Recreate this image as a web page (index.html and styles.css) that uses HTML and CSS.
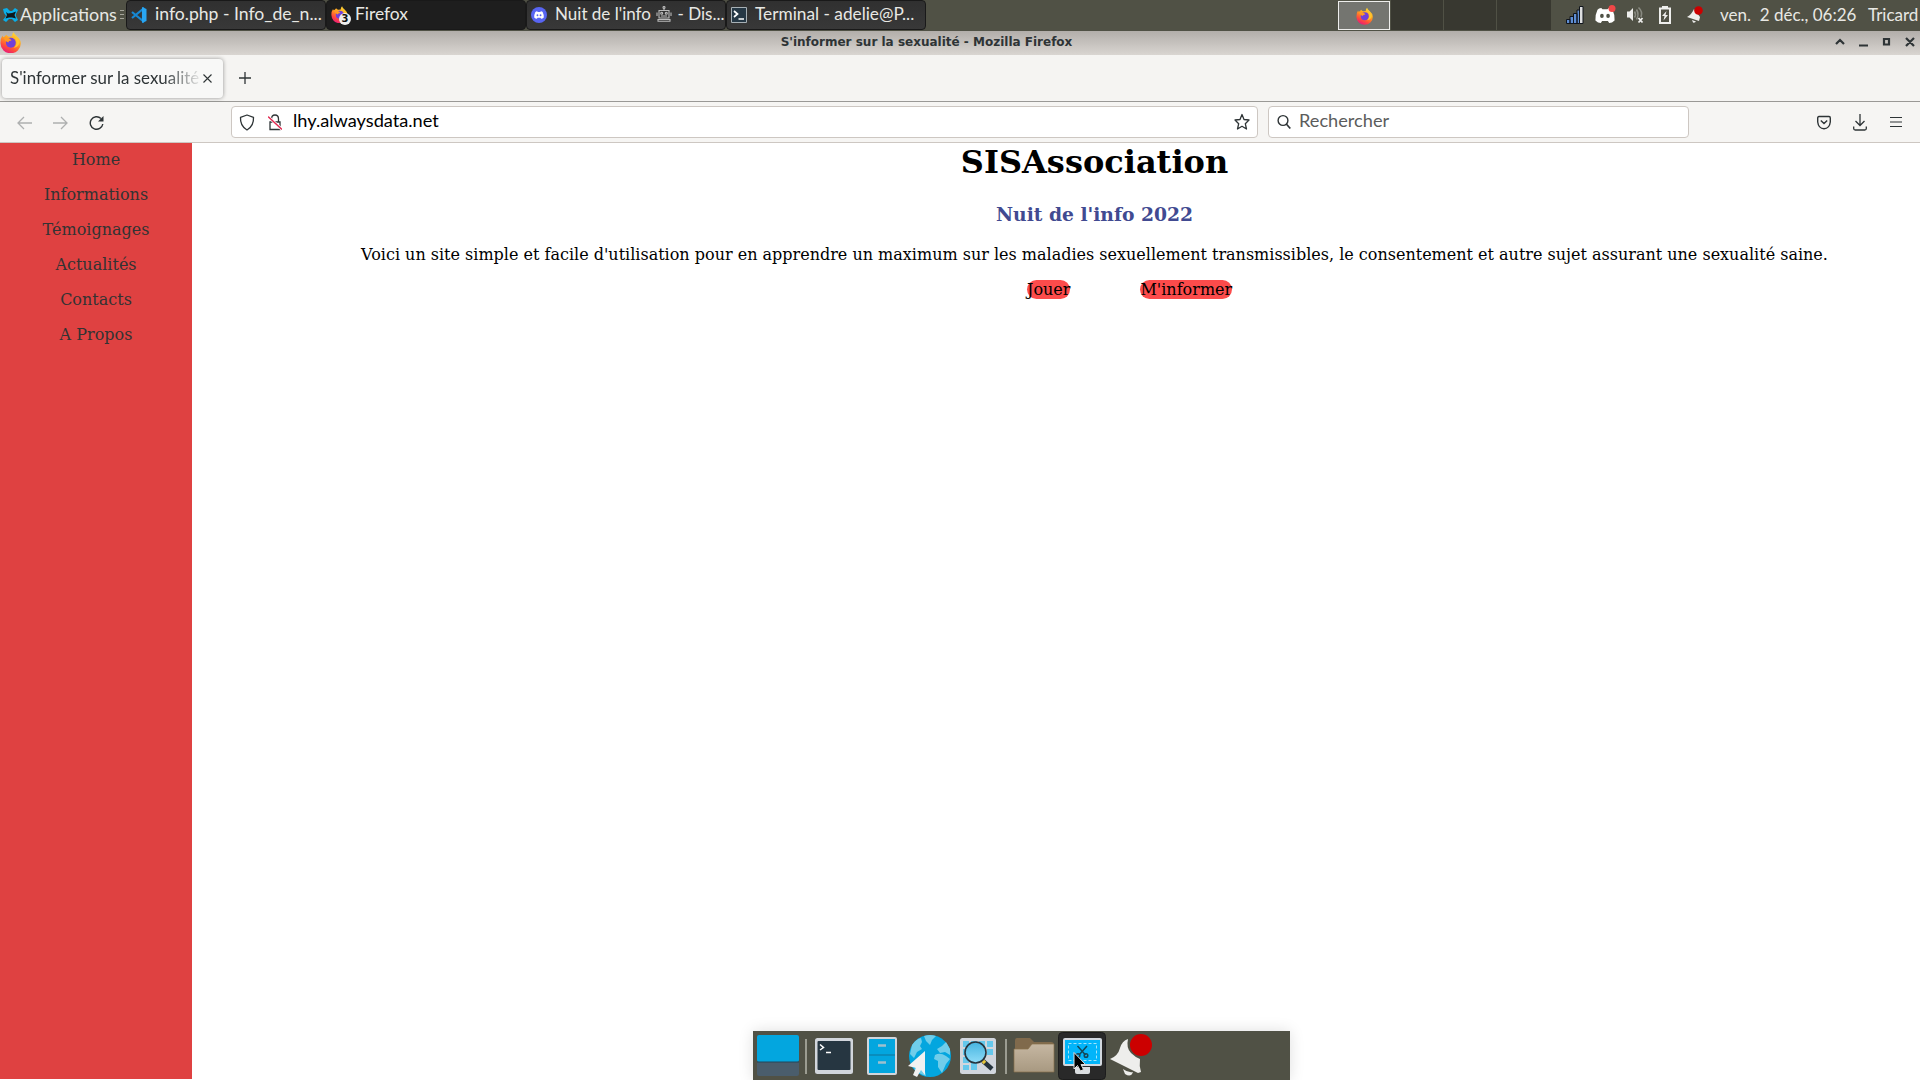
FILE: index.html
```html
<!DOCTYPE html>
<html lang="fr">
<head>
<meta charset="utf-8">
<title>S'informer sur la sexualité</title>
<link rel="stylesheet" href="styles.css">
</head>
<body>
<svg width="0" height="0" class="defs">
  <defs>
    <linearGradient id="flame" x1="0.8" y1="0" x2="0.3" y2="1"><stop offset="0" stop-color="#ffe53a"/><stop offset=".45" stop-color="#ff9a1f"/><stop offset=".75" stop-color="#ff4a3c"/><stop offset="1" stop-color="#e8187c"/></linearGradient>
    <linearGradient id="glass" x1="0" y1="0" x2="0" y2="1"><stop offset="0" stop-color="#46b4e0"/><stop offset="1" stop-color="#8fdcf8"/></linearGradient>
    <linearGradient id="paper" x1="0" y1="0" x2="0" y2="1"><stop offset="0" stop-color="#c6b7a2"/><stop offset="1" stop-color="#a89981"/></linearGradient>
    <symbol id="firefox" viewBox="0 0 20 20">
      <path d="M6 2.6Q7.2 4 8.5 4.5Q10.5 4 11.4 4Q11.4 1.6 13 .2Q13.7 2.4 16 4Q19.8 7 19.8 11A9.6 9.2 0 0 1 .5 11Q.2 6.400 2.400 3.400L3 5Q4.400 4.700 6 2.600Z" fill="url(#flame)"/>
      <circle cx="10.300" cy="10.200" r="4.700" fill="#7140d8"/>
      <path d="M3.500 6Q7 4.800 9.500 6.500L11 8.200Q8 8.400 7.800 10Q5 9 3.500 6Z" fill="#ff9b24"/>
      <path d="M14 5Q18 11 13 15Q18 14.500 18.800 9.500Q17.500 6 14 5Z" fill="#ffc52c"/>
    </symbol>
    <symbol id="discord" viewBox="0 0 24 20">
      <path d="M7.500 1L9 2.500H15L16.500 1Q20 1.500 21 3Q24 9 23.500 16Q20.500 19 17 19L15.500 16.500H8.500L7 19Q3.500 19 .5 16Q0 9 3 3Q4.500 1.500 7.500 1Z" fill="#fff"/>
      <ellipse cx="8.300" cy="10.500" rx="2.200" ry="2.500" fill="currentColor"/><ellipse cx="15.700" cy="10.500" rx="2.200" ry="2.500" fill="currentColor"/>
    </symbol>
  </defs>
</svg>

<header class="panel">
  <div class="apps">
    <svg width="15" height="16" viewBox="0 0 15 16"><path d="M0 2L4 1L7 4H9L12 1L15 3L13 7V9L15 13L12 15L9 12H6L3 15L0 13L3 9L1 6Z" fill="#0aaee8"/><path d="M3 5L5 6.500L9 6L13 4.500L11.500 8L13 11.500L9 10.500H6L2.500 11.500L4 8Z" fill="#10181b"/></svg>
    <span class="t apps-text">Applications</span>
    <svg class="grip" width="4" height="12" viewBox="0 0 4 12"><path d="M0 1.500H4M0 5.500H4M0 9.500H4" stroke="#a5a59b"/></svg>
  </div>
  <nav class="tasks">
    <div class="task">
      <svg width="16" height="16" viewBox="0 0 16 16"><path d="M1 5L12 14V2L1 11" fill="none" stroke="#1688d3" stroke-width="2.200"/><path d="M11 0L15.500 2V14L11 16Z" fill="#29a6f2"/></svg>
      <span class="t t1">info.php - Info_de_n...</span>
    </div>
    <div class="task active">
      <div class="fx"><svg width="17" height="17"><use href="#firefox"/></svg><b>3</b></div>
      <span class="t t2">Firefox</span>
    </div>
    <div class="task">
      <svg class="blurple" width="16" height="16" viewBox="0 0 16 16"><circle cx="8" cy="8" r="8" fill="#5865f2"/><use href="#discord" x="3" y="3.800" width="10" height="8.500"/></svg>
      <span class="t t3">Nuit de l'info <svg class="robot" width="16" height="16" viewBox="0 0 15 16" fill="none" stroke="#bbb" stroke-width="1.100"><circle cx="7.500" cy="1.500" r="1"/><path d="M7.500 2.500V4.500M2.500 4.500H12.500V12H2.500ZM.5 6.500V10M14.500 6.500V10M4.500 10H10.500M1.500 15.300V13.500H13.500V15.300Z"/><circle cx="5.200" cy="7.200" r="1"/><circle cx="9.800" cy="7.200" r="1"/></svg> - Dis...</span>
    </div>
    <div class="task">
      <svg width="16" height="16" viewBox="0 0 16 16"><path d="M.5 .5H15.500V15.500H.5Z" fill="#263845" stroke="#a7b0b5"/><path d="M3 4L6.500 7L3 10M7.500 12H13" fill="none" stroke="#fff" stroke-width="1.700"/></svg>
      <span class="t t4">Terminal - adelie@P...</span>
    </div>
  </nav>
  <div class="pager"><i class="current"><svg width="17" height="18"><use href="#firefox"/></svg></i><i></i><i></i><i></i></div>
  <div class="tray">
    <svg width="18" height="18" viewBox="0 0 18 18" stroke="#10151d"><path d="M.5 17.500V13.500H4V17.500ZM4 17.500V10.500H7.500V17.500ZM7.500 17.500V7.500H11V17.500ZM11 17.500V4H14V17.500Z" fill="#5e8ed4"/><path d="M13.500 17.500V.5H17V17.500Z" fill="#dedfe0"/></svg>
    <svg class="olive" width="21" height="20" viewBox="0 0 21 20"><use href="#discord" y="2" width="20" height="17"/><circle cx="17" cy="3.500" r="3.500" fill="#f04747"/></svg>
    <svg width="18" height="18" viewBox="0 0 18 18"><path d="M0 5.500H2.500L6 2V15L2.500 11.500H0Z" fill="#eeeeec"/><path d="M7.500 5.500Q9.500 8.500 7.500 11.500M9.500 3.500Q12.500 8.500 9.500 13.500M11.500 1.500Q16 5.500 14 11" fill="none" stroke="#898a81" stroke-width="1.600"/><path d="M11.500 12L15.500 16.500M15.500 12L11.500 16.500" stroke="#eeeeec" stroke-width="1.800"/></svg>
    <svg class="battery" width="12" height="18" viewBox="0 0 12 18"><path d="M1 2.500H11V17H1ZM3 1H9" fill="none" stroke="#eeeeec" stroke-width="2"/><path d="M7.500 5L3 10H5.500L4.500 14.500L9 9H6.500Z" fill="#eeeeec"/></svg>
    <svg class="bell" width="17" height="18" viewBox="0 0 17 18"><path d="M0 11Q5 8 7 3L13 11L12 15Z" fill="#eeeeec"/><path d="M5 14L9 15.500Q8 17 6 16.500Z" fill="#eeeeec"/><circle cx="11.500" cy="4.500" r="4.300" fill="#c00"/></svg>
  </div>
  <span class="t clock">ven.&nbsp; 2 déc., 06:26</span>
  <span class="t user">Tricard</span>
</header>

<div class="titlebar">
  <svg width="21" height="21"><use href="#firefox"/></svg>
  <div class="title">S'informer sur la sexualité - Mozilla Firefox</div>
  <svg class="wm" width="80" height="12" viewBox="0 0 80 12" fill="none" stroke="#2e3436" stroke-width="2.200"><path d="M1 8L5 4L9 8M24 9.500H33M49 3H54V8.500H49ZM71 2L79 10M79 2L71 10"/></svg>
</div>

<div class="tabbar">
  <div class="tab"><span class="t tabtext">S'informer sur la sexualité</span><svg width="9" height="9" viewBox="0 0 9 9"><path d="M.5 .5L8.500 8.500M8.500 .5L.5 8.500" stroke="#2e3436" stroke-width="1.100"/></svg></div>
  <svg width="12" height="12" viewBox="0 0 12 12"><path d="M6 0V12M0 6H12" stroke="#2e3436" stroke-width="1.300"/></svg>
</div>

<div class="navbar">
  <div class="arrows">
    <svg width="15" height="14" viewBox="0 0 15 14"><path d="M15 7H1M7 1L1 7L7 13" fill="none" stroke="#aeb0b0" stroke-width="1.300"/></svg>
    <svg width="15" height="14" viewBox="0 0 15 14"><path d="M0 7H14M8 1L14 7L8 13" fill="none" stroke="#aeb0b0" stroke-width="1.300"/></svg>
    <svg width="16" height="16" viewBox="0 0 16 16"><path d="M12 3.500A6.300 6.300 0 1 0 13.800 9" fill="none" stroke="#2e3436" stroke-width="1.400"/><path d="M14.500 1V6.500H9Z" fill="#2e3436"/></svg>
  </div>
  <div class="field url">
    <svg width="16" height="17" viewBox="0 0 16 17"><path d="M8 1L14.500 3.300Q15 12 8 16Q1 12 1.500 3.300Z" fill="none" stroke="#2e3436" stroke-width="1.300" stroke-linejoin="round"/></svg>
    <svg class="lock" width="14" height="17" viewBox="0 0 14 17"><path d="M2 8H12V15.500H2ZM3.500 8V5Q3.500 1 7 1T10.500 5V8" fill="none" stroke="#2e3436" stroke-width="1.300"/><path d="M0 2.500L14 15.500" stroke="#fff" stroke-width="3"/><path d="M0 2.500L14 15.500" stroke="#e22850" stroke-width="1.400"/></svg>
    <span class="t address">lhy.alwaysdata.net</span>
    <svg width="16" height="18" viewBox="0 0 16 18"><path d="M8 1.500L10 6.500L15 7L11.300 10.700L12.500 16L8 13.300L3.500 16L4.700 10.700L1 7L6 6.500Z" fill="none" stroke="#2e3436" stroke-width="1.300" stroke-linejoin="round"/></svg>
  </div>
  <div class="field search">
    <svg width="14" height="16" viewBox="0 0 14 16"><circle cx="6" cy="6.500" r="4.900" fill="none" stroke="#2e3436" stroke-width="1.400"/><path d="M9.300 10L13.300 14.500" stroke="#2e3436" stroke-width="1.700"/></svg>
    <span class="t placeholder">Rechercher</span>
  </div>
  <div class="tools">
    <svg width="14" height="15" viewBox="0 0 14 15" fill="none" stroke="#2e3436" stroke-width="1.400"><path d="M2 1.500H12Q13.300 1.500 13.300 3V7Q12.500 13.500 7 13.800Q1.500 13.500 .7 7V3Q.7 1.500 2 1.500ZM3.800 5.500L7 8.600L10.200 5.500"/></svg>
    <svg width="14" height="17" viewBox="0 0 14 17" fill="none" stroke="#2e3436" stroke-width="1.300"><path d="M7 0V11.500M2.500 7L7 11.500L11.500 7M.7 12.500V14.500Q.7 16 2.200 16H11.800Q13.300 16 13.300 14.500V12.500"/></svg>
    <svg class="menu" width="12" height="12" viewBox="0 0 12 12"><path d="M0 1.500H12M0 6H12M0 10.500H12" stroke="#2e3436" stroke-width="1.200"/></svg>
  </div>
</div>

<div class="page">
  <nav class="side"><a>Home</a><a>Informations</a><a>Témoignages</a><a>Actualités</a><a>Contacts</a><a>A Propos</a></nav>
  <main>
    <h1>SISAssociation</h1>
    <h2>Nuit de l'info 2022</h2>
    <p>Voici un site simple et facile d'utilisation pour en apprendre un maximum sur les maladies sexuellement transmissibles, le consentement et autre sujet assurant une sexualité saine.</p>
    <div class="links"><a>Jouer</a><a>M'informer</a></div>
  </main>
</div>

<div class="dock">
  <svg width="537" height="49" viewBox="0 0 537 49">
    <rect x="4" y="4" width="42" height="27" rx="2" fill="#03a6df"/><path d="M4 31H46V43Q46 45 44 45H6Q4 45 4 43Z" fill="#4a5d6c"/><path d="M4 31H46" stroke="#23465a"/>
    <path d="M53 8V43M253 8V43" stroke="#9b9c91" stroke-width="2"/>
    <rect x="62" y="7" width="38" height="36" rx="2.500" fill="#d2d6dc"/><rect x="64.500" y="10" width="33" height="29" rx="1" fill="#263641"/><path d="M67 13.500L70.500 16.500L67 19M73 21.500H78" fill="none" stroke="#fff" stroke-width="1.500"/>
    <rect x="114" y="6" width="30" height="38" rx="2" fill="#d2d6dc"/><rect x="116" y="8" width="26" height="34" fill="#03a6df"/><path d="M116 24H142" stroke="#11749b"/><path d="M125 14.500H133M125 31.500H133" stroke="#9ec0ce" stroke-width="2.500"/>
    <circle cx="177" cy="25" r="21" fill="#03a6df"/>
    <path d="M159 14Q163 8 168 7L169 11L167 15L169 18L164 21L161 27L157 23ZM171 5Q177 3 183 5L179 9L177 14L173 10ZM182 24Q187 21 193 25L197 28L193 33L189 42L185 36V30L181 28ZM189 15L193 11L197 18V24L192 21L187 22L184 18ZM165 34L171 37L173 45Q166 43 161 38Z" fill="#70cdea"/>
    <path d="M172 20V44L168 39L164 46L160 44L163 37L155 35Z" fill="#f0f1f1"/>
    <rect x="207" y="7" width="36" height="36" rx="2.500" fill="#d1d6dd"/><path d="M210 10H216V16H210ZM218 10H224V16H218ZM226 10H232V16H226ZM234 10H240V16H234ZM210 18H216V24H210ZM234 18H240V24H234ZM210 26H216V32H210ZM218 32H224V39H218ZM210 34H216V39H210Z" fill="#65c8ec"/><path d="M230 30L239 38" stroke="#26343e" stroke-width="4.500"/><path d="M229 29L232 32" stroke="#e7c73c" stroke-width="3.500"/><circle cx="222.500" cy="21.500" r="10.500" fill="url(#glass)" stroke="#26343e" stroke-width="1.600"/>
    <path d="M262 10Q262 7 264 7H277L281 11H298Q301 11 301 14V40H262Z" fill="#806a4c"/><path d="M261 18H275L279 13H301V41H261Z" fill="url(#paper)" stroke="#88704c" stroke-width=".7"/>
    <rect x="305.500" y="1.500" width="47" height="47" rx="4" fill="#292929" stroke="#1d1d1d"/><rect x="310" y="7" width="39" height="28" rx="2" fill="#d2d8df"/><rect x="312" y="9" width="35" height="24" fill="#02b5fa"/><rect x="315.500" y="12.500" width="28" height="17" fill="none" stroke="#a0e4fb" stroke-dasharray="3 2"/><path d="M322 36H337V41Q337 43 335 43H324Q322 43 322 41Z" fill="#dadde0"/>
    <g fill="none" stroke="#154757" stroke-width="1.500"><path d="M324.500 15L332.500 24M334 15L326 24"/><circle cx="325" cy="24.500" r="1.800"/><circle cx="333" cy="24.500" r="1.800"/></g>
    <path d="M321 21.500V38L324.500 34.500L327.500 40L330.500 38.500L328 33.500H332.500Z" fill="#000" stroke="#ddd" stroke-width="1"/>
    <path d="M357 28Q365 25 367 17Q369 10 375 8Q373 17 378 22Q382 26 387 28Q386 35 388 41L385 42Z" fill="#eeeeec"/><path d="M370 38Q375 42 380 41Q378 47 372 43Z" fill="#eeeeec"/><circle cx="388" cy="14" r="11" fill="#c00"/>
  </svg>
</div>
</body>
</html>
```
FILE: styles.css
```css
* { box-sizing: border-box; }
body { margin: 0; width: 1920px; height: 1080px; overflow: hidden; display: flex; flex-direction: column; background: #fff; font-family: "DejaVu Serif", serif; }
svg { display: block; flex: none; }
.defs { position: absolute; }
.t { font-family: Lato, "Noto Sans", sans-serif; font-size: 17px; line-height: 24px; white-space: pre; flex: none; }
.blurple { color: #5865f2; }
.olive { color: #505145; }

.panel { height: 31px; flex: none; background: #505145; display: flex; align-items: center; color: #e8e8e4; }
.panel .t { padding-bottom: 2px; }
.apps { width: 126px; display: flex; align-items: center; padding-left: 3px; padding-bottom: 1px; }
.panel .apps-text { margin-left: 2px; width: 95px; font-size: 17.9px; padding-bottom: 3px; }
.grip { margin-left: 5px; }
.tasks { display: flex; width: 800px; height: 31px; }
.task { width: 200px; height: 30px; display: flex; align-items: center; padding: 0 0 1px 4px; gap: 8px; background: linear-gradient(#303030, #383838); border: 1px solid #191919; border-radius: 4px; overflow: hidden; }
.task.active { background: #1e1e1e; gap: 7px; }
.t1 { font-size: 17.6px; }
.t2 { font-size: 17.4px; }
.t4 { font-size: 17.25px; }
.fx { position: relative; }
.fx b { position: absolute; left: 8px; top: 7px; width: 12px; height: 12px; border-radius: 6px; background: #eee; color: #111; font: bold 10px/12px "DejaVu Sans", sans-serif; text-align: center; }
.robot { display: inline-block; vertical-align: -2px; margin: 0 1px; }

.pager { margin-left: 412px; display: flex; gap: 1px; height: 31px; width: 213px; }
.pager i { flex: 0 0 52px; height: 30px; background: #383830; }
.pager i:last-child { flex: 1; }
.pager .current { height: 29px; background: #747570; border: 1px solid #eeeeec; margin-top: 1px; display: flex; align-items: center; justify-content: center; }
.tray { display: flex; align-items: center; margin-left: 15px; width: 154px; gap: 11px; padding-bottom: 1px; }
.battery { margin-left: 3px; }
.bell { margin-left: 5px; }
.clock { width: 148px; }

.titlebar { height: 24px; flex: none; display: flex; align-items: center; padding-bottom: 2px; background: linear-gradient(#b2aeaa, #d9d5d1); }
.title { flex: 1; text-align: center; padding-right: 3px; font: bold 12px/20px "DejaVu Sans", sans-serif; color: #2e3436; }
.wm { margin-right: 5px; }

.tabbar { height: 47px; flex: none; background: #f5f4f2; border-bottom: 1px solid #9a9996; display: flex; align-items: center; padding-left: 2px; gap: 16px; }
.tab { width: 221px; height: 39px; border-radius: 4px; background: #f8f8f7; box-shadow: 0 0 4px rgba(0,0,0,.4); display: flex; align-items: center; padding-left: 8px; color: #2e3436; }
.tabtext { width: 193px; font-size: 16.9px; overflow: hidden; -webkit-mask-image: linear-gradient(90deg, #000 153px, transparent 193px); mask-image: linear-gradient(90deg, #000 153px, transparent 193px); }

.navbar { height: 41px; flex: none; background: #f6f5f3; border-bottom: 1px solid #cdc7c2; display: flex; align-items: center; }
.arrows { width: 231px; padding-left: 17px; padding-top: 1px; display: flex; align-items: center; gap: 21px; }
.field { height: 32px; background: #fff; border: 1px solid #cdc7c2; border-radius: 4px; display: flex; align-items: center; }
.url { width: 1027px; padding: 0 7px; }
.lock { margin-left: 13px; }
.address { flex: 1; margin-left: 11px; padding-bottom: 4px; font-size: 18.2px; color: #000; }
.search { width: 421px; margin-left: 10px; padding-left: 8px; }
.placeholder { margin-left: 8px; padding-bottom: 4px; font-size: 18.2px; color: #5b5c5c; }
.tools { margin-left: 128px; display: flex; align-items: center; gap: 22px; }
.menu { margin-left: 1px; }

.page { flex: 1; display: flex; }
.side { width: 192px; flex: none; height: 936px; background: #df4141; color: #333; text-align: center; display: flex; flex-direction: column; gap: 16px; padding-top: 7px; font-size: 16px; line-height: 19px; }
main { flex: 1; padding-left: 77px; text-align: center; color: #000; }
h1 { margin: 0; font-size: 32px; line-height: 38px; }
h2 { margin: 22px 0 0; font-size: 18.72px; line-height: 23px; color: #414a91; }
p { margin: 19px 0 0; font-size: 16px; line-height: 19px; white-space: nowrap; }
.links { display: flex; margin: 16px 0 0 758px; gap: 70px; }
.links a { background: #fc4b4b; border-radius: 10px; font-size: 16px; line-height: 19px; }

.dock { position: absolute; left: 753px; top: 1031px; width: 537px; height: 49px; background: #505145; box-shadow: 0 0 14px rgba(0,0,0,.13); }
```
